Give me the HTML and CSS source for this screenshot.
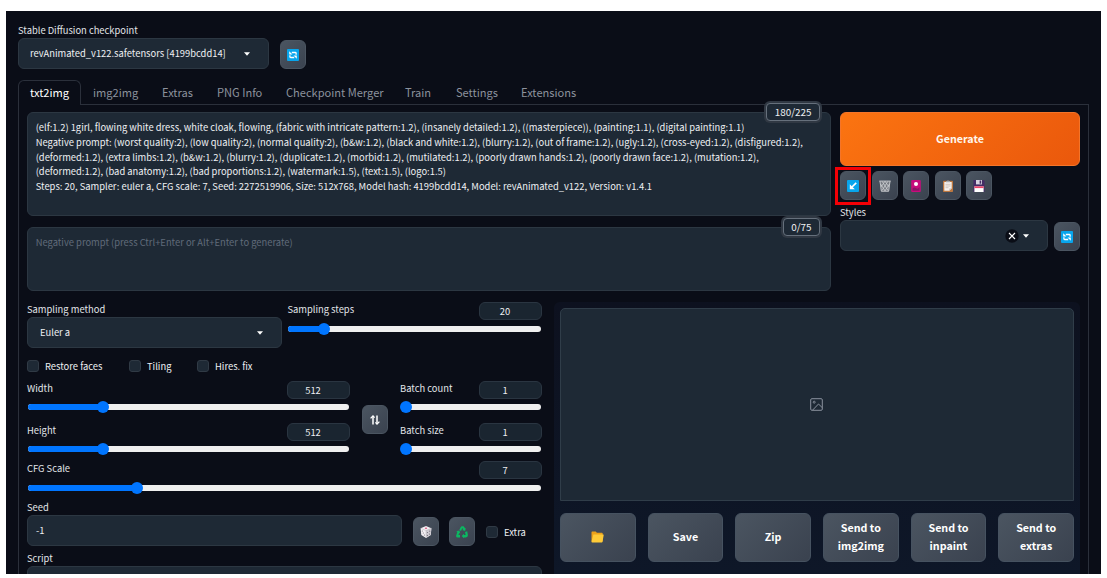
FILE: index.html
```html
<!DOCTYPE html>
<html lang="en">
<head>
<meta charset="utf-8">
<title>Stable Diffusion</title>
<link rel="stylesheet" href="styles.css">
</head>
<body>
<svg class="defs" width="0" height="0">
  <symbol id="refresh" viewBox="0 0 12 12">
    <rect width="12" height="12" rx="1" fill="#08a5ec"/>
    <path d="M4.800 3.500H8.300q.8 0 .8.800v1.500M7.200 8.500H3.700q-.8 0-.8-.8V6.200" fill="none" stroke="#fff" stroke-width="1.300"/>
    <path d="M2.200 2.300v3.300h3.300zM9.800 9.700V6.400H6.500z" fill="#fff"/>
  </symbol>
  <symbol id="caret" viewBox="0 0 6 4"><path d="M0 .3h6L3 3.7z" fill="#fff"/></symbol>
</svg>
<main class="app">
  <section class="checkpoint">
    <div class="label">Stable Diffusion checkpoint</div>
    <div class="checkpoint-row">
      <div class="select select-model"><span>revAnimated_v122.safetensors [4199bcdd14]</span><svg class="caret"><use href="#caret"/></svg></div>
      <button class="tool"><svg class="ico"><use href="#refresh"/></svg></button>
    </div>
  </section>

  <nav class="tabs">
    <span class="tab active">txt2img</span><span class="tab t-img">img2img</span><span class="tab t-extras">Extras</span><span class="tab t-png">PNG Info</span><span class="tab t-merge">Checkpoint Merger</span><span class="tab t-train">Train</span><span class="tab t-set">Settings</span><span class="tab t-ext">Extensions</span>
  </nav>

  <section class="panel">
    <div class="top">
      <div class="prompts">
        <div class="box prompt">
          <span class="counter">180/225</span>
          <div class="line">(elf:1.2) 1girl, flowing white dress, white cloak, flowing, (fabric with intricate pattern:1.2), (insanely detailed:1.2), ((masterpiece)), (painting:1.1), (digital painting:1.1)</div>
          <div class="line">Negative prompt: (worst quality:2), (low quality:2), (normal quality:2), (b&amp;w:1.2), (black and white:1.2), (blurry:1.2), (out of frame:1.2), (ugly:1.2), (cross-eyed:1.2), (disfigured:1.2),</div>
          <div class="line">(deformed:1.2), (extra limbs:1.2), (b&amp;w:1.2), (blurry:1.2), (duplicate:1.2), (morbid:1.2), (mutilated:1.2), (poorly drawn hands:1.2), (poorly drawn face:1.2), (mutation:1.2),</div>
          <div class="line">(deformed:1.2), (bad anatomy:1.2), (bad proportions:1.2), (watermark:1.5), (text:1.5), (logo:1.5)</div>
          <div class="line">Steps: 20, Sampler: euler a, CFG scale: 7, Seed: 2272519906, Size: 512x768, Model hash: 4199bcdd14, Model: revAnimated_v122, Version: v1.4.1</div>
        </div>
        <div class="box negative">
          <span class="counter">0/75</span>
          <div class="line placeholder">Negative prompt (press Ctrl+Enter or Alt+Enter to generate)</div>
        </div>
      </div>
      <div class="actions">
        <button class="generate">Generate</button>
        <div class="tools">
          <button class="tool marked"><svg class="ico" viewBox="0 0 12 12"><rect width="12" height="12" rx="1" fill="#08a5ec"/><path d="M9.200 2.800 5 7" stroke="#fff" stroke-width="1.700"/><path d="M2.800 4.200v5h5z" fill="#fff"/></svg></button>
          <button class="tool"><svg class="ico" viewBox="0 0 12 12"><path d="M.5 1h11L9.900 11.600H2.100z" fill="#777b82"/><path d="M.3 1h11.400M2.200 11.300h7.600M1 1l1.300 10M11 1 9.700 11M3 1.200l6 9.300M9 1.200l-6 9.300M6 1.200l3.800 5.600M6 1.200 2.200 6.800M1.500 4l4.700 7M10.500 4l-4.700 7" stroke="#cdcfd3" stroke-width=".8" fill="none"/></svg></button>
          <button class="tool"><svg class="ico" viewBox="0 0 12 12"><rect x="1.200" y="0" width="9.600" height="12" rx="1" fill="#c70c7c"/><path d="M2.500 10.700V8.600q1.700-2 3.500-.5t3.500-1v3.600z" fill="#8c1265"/><circle cx="6" cy="3.900" r="2" fill="#fff"/></svg></button>
          <button class="tool"><svg class="ico" viewBox="0 0 12 12"><rect x="1" y=".7" width="10" height="11.300" rx=".8" fill="#bd7841"/><path d="M2.300 2h7.400v6.400L7.300 10.800h-5z" fill="#f6f1ed"/><path d="M9.700 8.400H7.300v2.400z" fill="#c9bdb5"/><path d="M4 2.300V.9h1.200Q6-.6 6.800.9H8v1.400z" fill="#a5a9ae"/><path d="M3.500 4.300h5M3.500 6h5M3.500 7.700h3" stroke="#b9aaa0" stroke-width=".6"/></svg></button>
          <button class="tool"><svg class="ico" viewBox="0 0 12 12"><path d="M.4 0h10l1.200 1.200V12H.4z" fill="#452d66"/><path d="M3 0h6v4.400H3z" fill="#d6d3df"/><path d="M6.600.5h1.600v3.200H6.600z" fill="#452d66"/><path d="M1.400 6.300h9.200V12H1.400z" fill="#fff"/><path d="M1.400 6.300h9.200v1.800H1.400z" fill="#e9456a"/></svg></button>
        </div>
        <div class="label styles-label">Styles</div>
        <div class="styles-row">
          <div class="select styles-select"><svg class="clear" viewBox="0 0 14 14"><circle cx="7" cy="7" r="6.700" fill="#0a0d16"/><path d="m4 4 6 6M10 4l-6 6" stroke="#fff" stroke-width="1.100"/></svg><svg class="caret"><use href="#caret"/></svg></div>
          <button class="tool"><svg class="ico"><use href="#refresh"/></svg></button>
        </div>
      </div>
    </div>

    <div class="bottom">
      <div class="settings">
        <div class="sampling">
          <div class="method">
            <div class="label">Sampling method</div>
            <div class="select"><span>Euler a</span><svg class="caret"><use href="#caret"/></svg></div>
          </div>
          <div class="field steps"><div class="head"><span class="label">Sampling steps</span><span class="num">20</span></div><div class="track"><i class="fill" style="width:36px"></i></div></div>
        </div>
        <div class="checks">
          <label class="check c1"><i></i>Restore faces</label><label class="check c2"><i></i>Tiling</label><label class="check"><i></i>Hires. fix</label>
        </div>
        <div class="dims">
          <div class="col">
            <div class="field"><div class="head"><span class="label">Width</span><span class="num">512</span></div><div class="track"><i class="fill" style="width:75px"></i></div></div>
            <div class="field"><div class="head"><span class="label">Height</span><span class="num">512</span></div><div class="track"><i class="fill" style="width:75px"></i></div></div>
          </div>
          <button class="tool swap"><svg viewBox="0 0 10 10"><path d="M3 9.600V1.500M7 .4v8.100" stroke="#fff" stroke-width="1.500"/><path d="M.6 3.400 3 .9l1.600 1.700M5.400 7.400 7 9.100l2.400-2.500" fill="none" stroke="#fff" stroke-width="1.300"/></svg></button>
          <div class="col">
            <div class="field"><div class="head"><span class="label">Batch count</span><span class="num">1</span></div><div class="track"><i class="fill" style="width:5px"></i></div></div>
            <div class="field"><div class="head"><span class="label">Batch size</span><span class="num">1</span></div><div class="track"><i class="fill" style="width:5px"></i></div></div>
          </div>
        </div>
        <div class="field cfg"><div class="head"><span class="label">CFG Scale</span><span class="num">7</span></div><div class="track"><i class="fill" style="width:109px"></i></div></div>
        <div class="label seed-label">Seed</div>
        <div class="seed-row">
          <div class="box seed">-1</div>
          <button class="tool dice"><svg class="ico" viewBox="0 0 12 12"><path d="m6 0 5.400 2.200-.7 6.700L6 12 1.300 8.900.6 2.200z" fill="#f3f0f4"/><path d="M6 4.600 11.400 2.200l-.7 6.700L6 12z" fill="#cfccd3"/><path d="M6 4.600V12M.6 2.200 6 4.600l5.400-2.400" stroke="#aaa6af" stroke-width=".4" fill="none"/><ellipse cx="6" cy="2.200" rx="1.200" ry=".7" fill="#dc5a80"/><g fill="#77727e"><circle cx="2.300" cy="5" r=".6"/><circle cx="4.400" cy="9" r=".6"/><circle cx="3.300" cy="7" r=".6"/><circle cx="7.500" cy="6.500" r=".6"/><circle cx="9.700" cy="5.200" r=".6"/><circle cx="7.400" cy="9.400" r=".6"/><circle cx="9.500" cy="8.100" r=".6"/></g></svg></button>
          <button class="tool recycle"><svg class="ico" viewBox="0 0 12 12"><g fill="#0bb861"><path d="M3.300 4.100 4.800 1Q5.200.3 6 .3h1.300q.6 0 1 .8l.7 1.300.9-.4-.8 3L6.200 4l1-.6L6.300 1.900 5 4.900z"/><path d="m.3 5.200 3-.6 1 2.900-1-.5-.9 2H4v2.500H1.700Q-.3 11.300.2 9.600L1.300 6z"/><path d="M9 6l2.200-.8.700 3.800q.2 2.300-2 2.400H8v1L5.700 10 8 7.800v1.200h1.600z"/></g></svg></button>
          <label class="check"><i></i>Extra</label>
        </div>
        <div class="label script-label">Script</div>
        <div class="select script"></div>
      </div>

      <div class="output">
        <div class="preview"><svg viewBox="0 0 13 13"><rect x=".7" y=".7" width="11.600" height="11.600" rx="1.200" fill="none" stroke="#8a929e"/><circle cx="4.200" cy="4.200" r="1" fill="none" stroke="#8a929e" stroke-width=".9"/><path d="m2.700 12 5.800-6 3.800 3.700" fill="none" stroke="#8a929e"/></svg></div>
        <div class="sends">
          <button><svg class="folder" viewBox="0 0 13 12"><path d="M.5 1.200Q.5.500 1.200.500h3.500l1.200 1.300h5q.8 0 .8.800v8H.5z" fill="#eda21b"/><path d="M2.400 3.600h9.900q.5 0 .4.500l-1.200 6.700q-.1.600-.7.600H1.200q-.7 0-.7-.7z" fill="#ffcb38"/></svg></button>
          <button>Save</button><button>Zip</button><button>Send to<br>img2img</button><button>Send to<br>inpaint</button><button>Send to<br>extras</button>
        </div>
      </div>
    </div>
  </section>
</main>
</body>
</html>
```
FILE: styles.css
```css
* { box-sizing: border-box; }
body { margin: 0; padding: 11px 6px 4px; height: 578px; overflow: hidden; background: #fff; font-family: "Noto Sans CJK SC", "Noto Sans", sans-serif; font-size: 9.38px; color: #eef0f3; }
button { padding: 0; border: 0; font: inherit; color: inherit; }
svg { display: block; flex: none; }
.defs { position: absolute; }
.app { height: 563px; overflow: hidden; padding: 12px 12px 0; background: #0a0d17; }
.label { display: block; height: 15px; line-height: 15px; white-space: nowrap; color: #e2e5e9; }
.checkpoint-row { display: flex; align-items: flex-end; gap: 11px; }
.select { display: flex; align-items: center; justify-content: space-between; height: 31px; padding: 0 18px 0 12px; border: 1px solid #2c3742; border-radius: 6px; background: #1e2935; line-height: 14px; white-space: nowrap; }
.select span { margin-top: -1px; }
.select-model { width: 251px; padding-left: 11px; }
.caret { width: 6px; height: 4px; }
.tool { display: flex; flex: none; align-items: center; justify-content: center; width: 26px; height: 29px; border: 1px solid #4b5561; border-radius: 6px; background: linear-gradient(135deg, #4b5561, #3a424f); }
.ico { width: 12px; height: 12px; }

.tabs { display: flex; height: 25px; margin-top: 11px; border-bottom: 1px solid #2b303b; font-size: 11.08px; line-height: 25px; color: #8c929d; white-space: nowrap; }
.tab { flex: none; height: 25px; }
.active { width: 63px; padding-left: 11px; border: 1px solid #2b303b; border-bottom: 0; border-radius: 6px 6px 0 0; background: #0a0d17; color: #fff; line-height: 23px; }
.t-img { width: 81px; padding-left: 12px; }
.t-extras { width: 55px; }
.t-png { width: 69px; }
.t-merge { width: 119px; }
.t-train { width: 51px; }
.t-set { width: 65px; }

.panel { height: 480px; padding: 7px 8px 0; border: 1px solid #2b303b; border-top: 0; }
.top { display: grid; grid-template-columns: 804px 240px; gap: 9px; }
.prompts { display: grid; grid-template-rows: 104px 64px; gap: 11px; }
.box { position: relative; padding: 7.3px 7.7px; border: 1px solid #2c3742; border-radius: 6px; background: #1e2935; }
.line { width: max-content; height: 14.65px; line-height: 14.65px; white-space: pre; }
.placeholder { color: #606b7a; }
.counter { position: absolute; right: 10px; top: -10px; height: 18px; padding: 0 7.5px; border: 1px solid #66707c; border-radius: 4px; box-shadow: 0 0 0 2px #303843; background: #1e2935; font-size: 9.9px; line-height: 16px; }
.generate { display: block; width: 240px; height: 54px; border: 1px solid #f4752a; border-radius: 6px; background: linear-gradient(135deg, #fb7411, #ea580c); color: #fff7ed; font-size: 10.7px; font-weight: 700; line-height: 50px; }
.tools { display: flex; gap: 5.5px; margin-top: 5px; }
.marked { position: relative; }
.marked::after { content: ""; position: absolute; inset: -5px -6px -6px -6px; border: 3px solid #f40006; }
.styles-label { margin-top: 5px; }
.styles-row { display: flex; align-items: flex-end; gap: 6px; }
.styles-select { flex: 1; justify-content: flex-end; gap: 4px; }
.clear { width: 14px; height: 14px; }

.bottom { display: grid; grid-template-columns: 515px 526px; gap: 12px; margin-top: 11px; }
.settings { min-width: 0; }
.sampling { display: grid; grid-template-columns: 255px 255px; gap: 5px; height: 46px; }
.steps .head .label { margin-left: 0.4px; }
.head { display: flex; justify-content: space-between; height: 18px; }
.num { width: 63px; height: 18px; padding-right: 11px; border: 1px solid #2a3541; border-radius: 6px; background: #1a2530; line-height: 16px; text-align: center; }
.track { height: 6px; margin: 6px 1px 0; border-radius: 3px; background: #efefef; }
.fill { position: relative; display: block; height: 6px; border-radius: 3px 0 0 3px; background: #0075ff; }
.fill::after { content: ""; position: absolute; right: -6px; top: -3px; width: 12px; height: 12px; border-radius: 50%; background: #0075ff; }
.checks { display: flex; margin-top: 12px; }
.check { display: flex; align-items: center; height: 12px; line-height: 10px; gap: 6px; white-space: nowrap; }
.check i { width: 12px; height: 12px; border: 1px solid #303a45; border-radius: 3px; background: #1e2935; }
.c1 { width: 102px; }
.c2 { width: 68px; }
.dims { display: grid; grid-template-columns: 323px 26px 142px; column-gap: 12px; margin-top: 9px; }
.dims .field { height: 42px; }
.dims .track { margin-top: 5px; }
.swap { margin-top: 24px; }
.swap svg { width: 10px; height: 10px; }
.cfg { margin-top: -4px; height: 38px; }
.seed-label { margin-top: 1px; }
.seed-row { display: flex; align-items: flex-end; height: 31px; }
.seed { width: 375px; height: 31px; padding: 0 8px; line-height: 28px; }
.dice { margin-left: 11px; }
.recycle { margin: 0 11px 0 10px; }
.seed-row .check { margin-bottom: 8px; }
.script-label { margin-top: 5px; }
.output { height: 272px; padding: 6px; background: linear-gradient(#0d111f, #0e1728); border-radius: 6px 6px 0 0; }
.preview { display: grid; place-items: center; height: 193px; padding: 0 2px 1px 0; border: 1px solid #303d49; border-radius: 5px 5px 0 0; background: #1e2935; }
.preview svg { width: 13px; height: 13px; }
.sends { display: grid; grid-template-columns: repeat(6, 1fr); gap: 12px; margin-top: 12px; }
.sends button { display: grid; place-items: center; height: 49px; border: 1px solid #465260; border-radius: 6px; background: linear-gradient(135deg, #4b5561, #3a424f); font-size: 10.7px; line-height: 18px; padding-bottom: 1px; font-weight: 700; color: #fff; }
.folder { width: 13px; height: 12px; }
```
